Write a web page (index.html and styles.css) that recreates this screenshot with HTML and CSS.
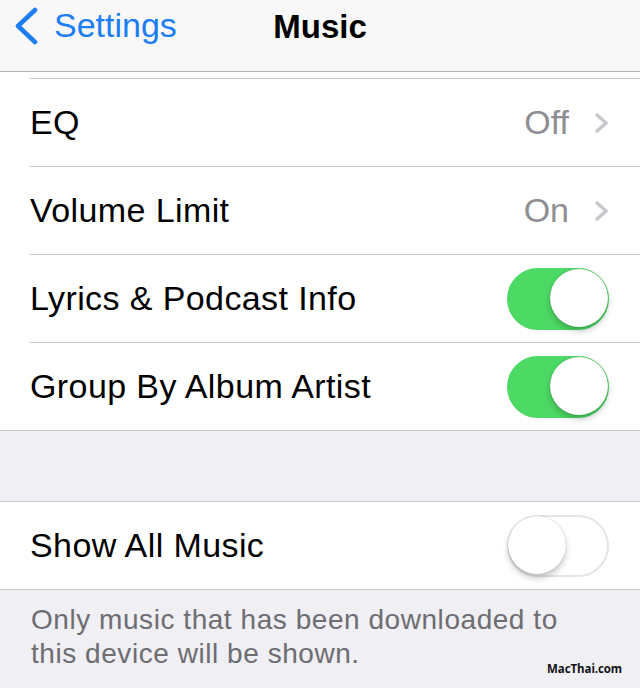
FILE: index.html
```html
<!DOCTYPE html>
<html>
<head>
    <meta charset="UTF-8" />
    <title>Music</title>
    <link rel="stylesheet" href="styles.css">
</head>
<body>
    <div class="navbar">
        <a class="back" href="#">
            <svg class="back-icon" width="28" height="40" viewBox="0 0 28 40">
                <polyline points="24,5 7,21 24,37" fill="none" stroke="#1c7ef2" stroke-width="4.5" stroke-linecap="round" stroke-linejoin="round" />
            </svg>
            <span>Settings</span>
        </a>
        <div class="title">Music</div>
    </div>

    <div class="group">
        <div class="cut"></div>
        <div class="row">
            <span class="label">EQ</span>
            <span class="detail">Off</span>
            <svg class="chevron" width="16" height="24" viewBox="0 0 16 24">
                <polyline points="3,3 13,12 3,21" fill="none" stroke="#c7c7cc" stroke-width="3.4" />
            </svg>
        </div>
        <div class="row">
            <span class="label">Volume Limit</span>
            <span class="detail">On</span>
            <svg class="chevron" width="16" height="24" viewBox="0 0 16 24">
                <polyline points="3,3 13,12 3,21" fill="none" stroke="#c7c7cc" stroke-width="3.4" />
            </svg>
        </div>
        <div class="row">
            <span class="label">Lyrics &amp; Podcast Info</span>
            <div class="switch on"><div class="knob"></div></div>
        </div>
        <div class="row">
            <span class="label">Group By Album Artist</span>
            <div class="switch on"><div class="knob"></div></div>
        </div>
    </div>

    <div class="gap"></div>

    <div class="group">
        <div class="row first">
            <span class="label">Show All Music</span>
            <div class="switch"><div class="knob"></div></div>
        </div>
    </div>

    <div class="footer">Only music that has been downloaded to<br>this device will be shown.</div>

    <div class="watermark">MacThai.com</div>
</body>
</html>
```

FILE: styles.css
```css
body {
    margin: 0;
    padding: 0;
    width: 640px;
    height: 688px;
    overflow: hidden;
    background: #efeff4;
    font-family: "Liberation Sans", Arial, sans-serif;
    position: relative;
}
.navbar {
    height: 71px;
    background: #f8f8f8;
    border-bottom: 1px solid #b2b2b2;
    position: relative;
    display: flex;
    align-items: center;
    justify-content: center;
}
.back {
    position: absolute;
    left: 11px;
    top: 5px;
    display: flex;
    align-items: center;
    gap: 15px;
    color: #1c7ef2;
    text-decoration: none;
    font-size: 34px;
    line-height: 38px;
}
.back-icon {
    display: block;
}
.title {
    font-size: 33px;
    font-weight: bold;
    color: #000;
    margin-top: -17px;
}
.group {
    background: #fff;
    border-bottom: 1px solid #c8c7cc;
}
.cut {
    height: 6px;
}
.row {
    height: 87px;
    margin-left: 30px;
    padding-right: 31px;
    border-top: 1px solid #c8c7cc;
    display: flex;
    align-items: center;
    font-size: 34px;
    letter-spacing: 0.4px;
}
.row.first {
    margin-left: 0;
    padding-left: 30px;
}
.group:last-of-type {
    border-top: 1px solid #c8c7cc;
}
.label {
    flex: 1;
    color: #000;
}
.detail {
    color: #8e8e93;
    margin-right: 24px;
    letter-spacing: 0;
}
.chevron {
    display: block;
}
.switch {
    width: 102px;
    height: 62px;
    box-sizing: border-box;
    border-radius: 31px;
    border: 2px solid #e5e5ea;
    background: #fff;
    position: relative;
}
.switch.on {
    background: #4cd964;
    border-color: #4cd964;
}
.knob {
    position: absolute;
    top: -1px;
    left: -1px;
    width: 58px;
    height: 58px;
    border-radius: 50%;
    background: #fff;
    box-shadow: 0 4px 6px rgba(0,0,0,0.22), 0 0 1px rgba(0,0,0,0.3);
}
.switch.on .knob {
    left: auto;
    right: -1px;
}
.gap {
    height: 70px;
}
.footer {
    padding: 13px 20px 0 31px;
    font-size: 28px;
    line-height: 34px;
    letter-spacing: 0.55px;
    color: #6d6d72;
}
.watermark {
    position: absolute;
    right: 18px;
    bottom: 12px;
    font-family: "Open Sans", sans-serif;
    font-weight: bold;
    font-size: 11.5px;
    letter-spacing: -0.1px;
    color: #111;
}
```
